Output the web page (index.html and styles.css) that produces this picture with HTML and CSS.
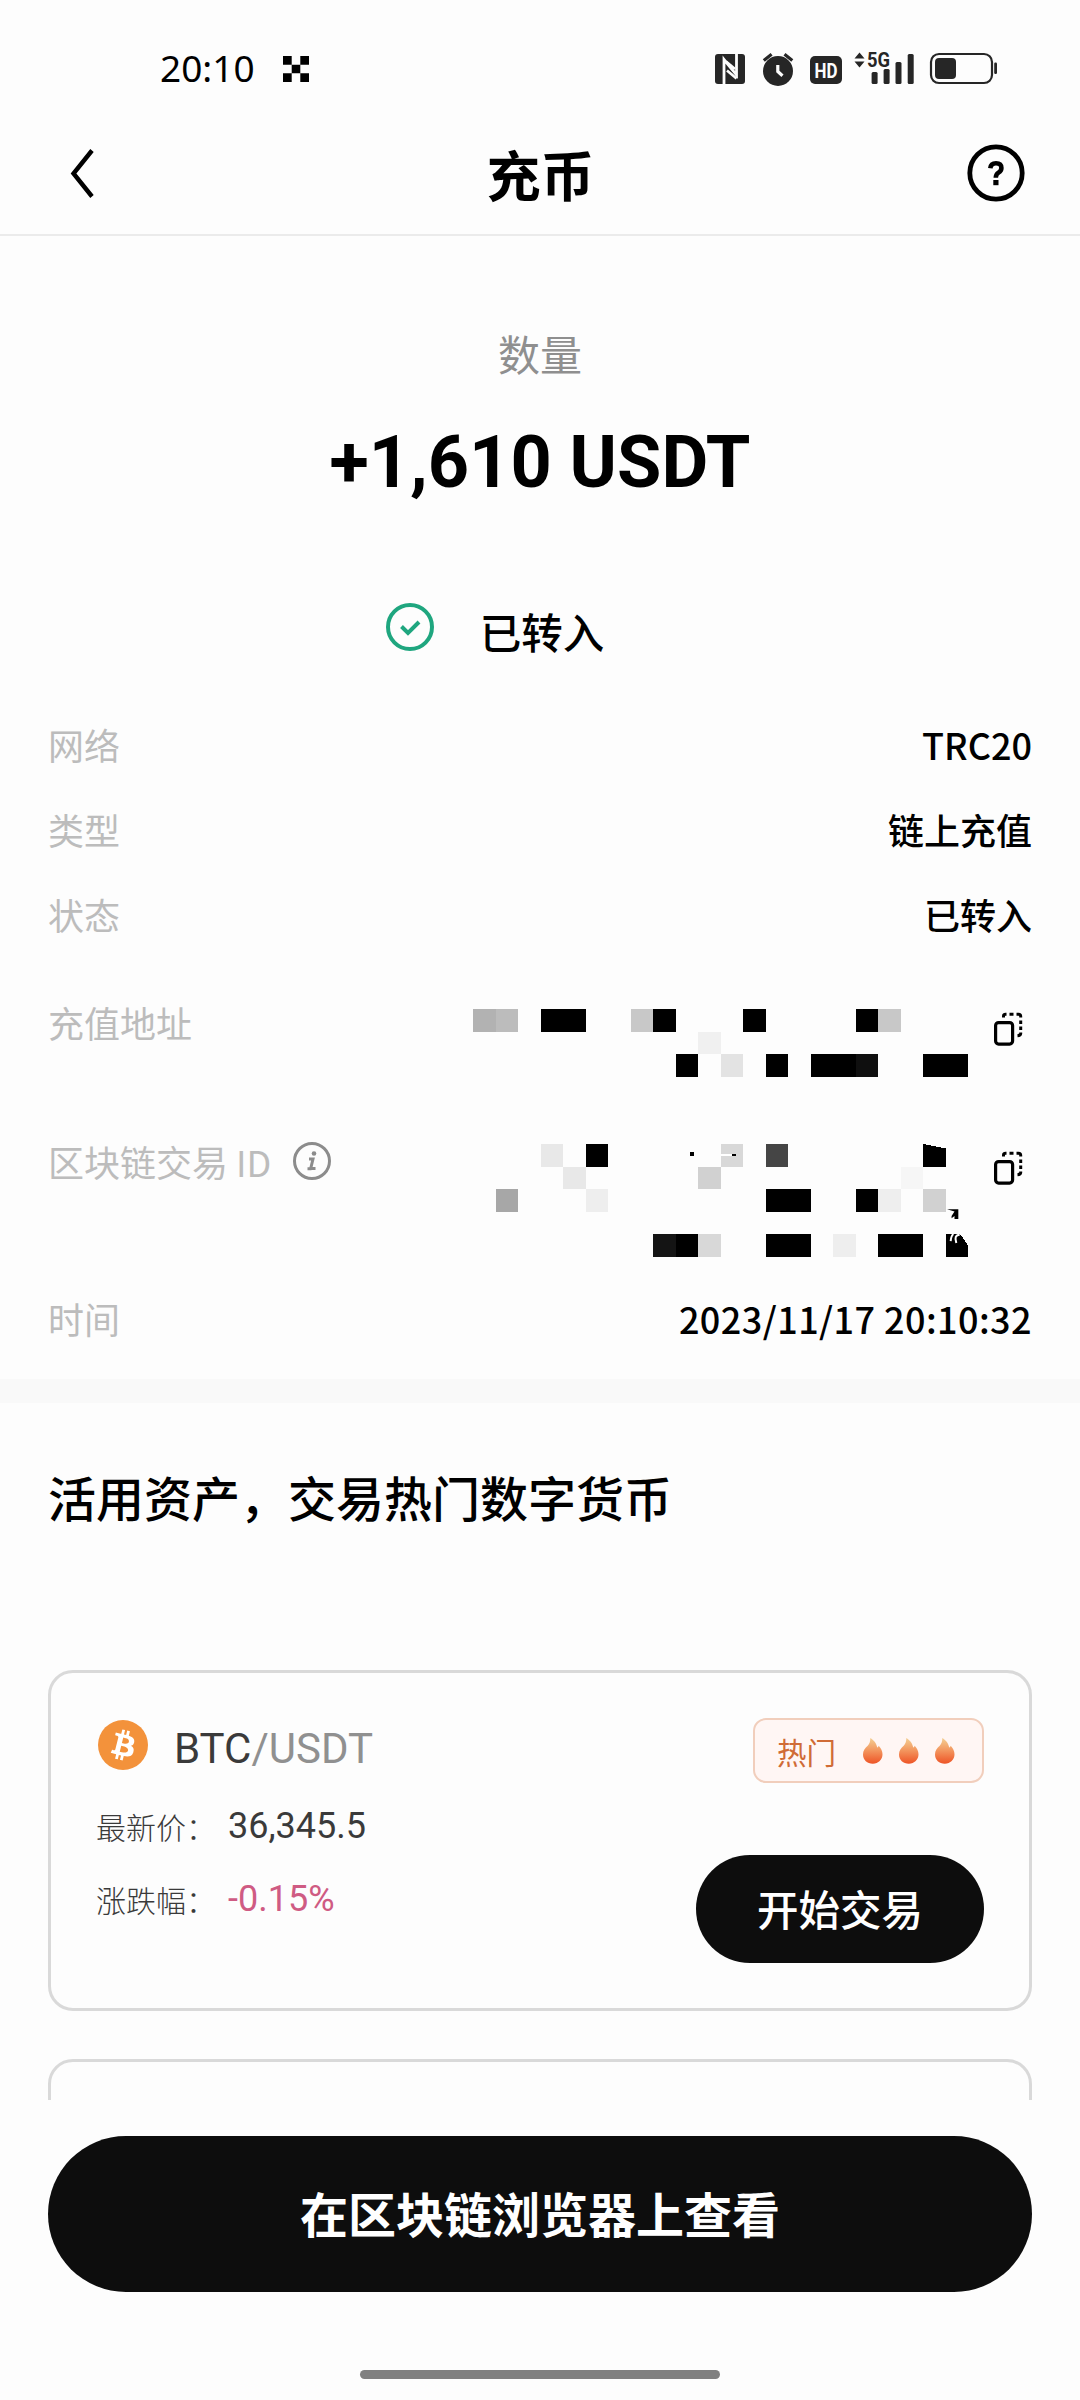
FILE: index.html
```html
<!DOCTYPE html>
<html lang="zh-CN">
<head>
<meta charset="utf-8">
<title>充币</title>
<link rel="stylesheet" href="styles.css">
</head>
<body>
<svg class="defs" width="0" height="0" aria-hidden="true">
  <defs>
    <linearGradient id="fire" x1="0" y1="0" x2="0" y2="1">
      <stop offset="0" stop-color="#f3cf93"/>
      <stop offset="0.45" stop-color="#f39a62"/>
      <stop offset="1" stop-color="#ee5426"/>
    </linearGradient>
    <symbol id="flame" viewBox="0 0 20 26">
      <path fill="url(#fire)" d="M7.300 0c3.200 2 6.200 5 6.900 9.600c.9-.5 1.300-1 1.500-1.900c2.300 2.400 3.800 5.300 3.800 8.600c0 5.400-4.100 9.400-9.700 9.400S0 21.700 0 16.400c0-4 2.100-6.200 4.700-8.700C6.800 5.600 7.300 3.400 7.300 0z"/>
    </symbol>
    <symbol id="copy" viewBox="0 0 30 34">
      <rect x="1.600" y="10.600" width="17" height="21.500" rx="3" fill="none" stroke="#000" stroke-width="3.200"/>
      <path d="M9.500 5.500V4Q9.500 2.300 11.500 2.300H12.500M15.500 2.300H19.500M22.500 2.300H24.500Q26.700 2.300 26.700 4.300V5.500M26.700 8.500V12M26.700 14.500V18M26.700 20.500V21.500Q26.500 23.500 23.500 23.700" fill="none" stroke="#000" stroke-width="3"/>
    </symbol>
  </defs>
</svg>

<div class="screen">
  <div class="status">
    <div class="status-left">
      <span class="clock">20:10</span>
      <svg width="26" height="26" viewBox="0 0 26 26"><path d="M0 0h8.700v8.700H0zM17.300 0H26v8.700h-8.700zM8.700 8.700h8.600v8.600H8.700zM0 17.300h8.700V26H0zM17.300 17.300H26V26h-8.700z"/></svg>
    </div>
    <svg class="status-icons" width="284" height="56" viewBox="714 41 284 56">
      <g fill="#262626">
        <rect x="715" y="54" width="30" height="30" rx="3"/>
        <path d="M724 84V59.500L736.500 75V54" fill="none" stroke="#fdfdfd" stroke-width="2.800"/>
        <path d="M727.500 67l7.500 8.500V84h-7.500z" fill="#262626"/>
        <path d="M726 61.500l9 7.500" fill="none" stroke="#fdfdfd" stroke-width="2.600"/>
        <path d="M727 70.500l9.500 8" fill="none" stroke="#fdfdfd" stroke-width="2.600"/>
        <circle cx="778" cy="71" r="15"/>
        <path d="M763.800 60.500l7.800-6.200M792.300 60.500l-7.800-6.200" stroke="#262626" stroke-width="3.200"/>
        <path d="M777.800 65v6.500l4.700 4.200" fill="none" stroke="#fdfdfd" stroke-width="3.200"/>
        <rect x="810" y="56" width="32" height="28" rx="5"/>
        <text class="hd" x="826" y="77.500" text-anchor="middle" textLength="23" lengthAdjust="spacingAndGlyphs">HD</text>
        <path d="M859.500 52.500l5 6h-10zM859.500 67.500l5-6h-10z"/>
        <text class="net" x="867" y="67" textLength="23" lengthAdjust="spacingAndGlyphs">5G</text>
        <rect x="871.600" y="72" width="6" height="12" rx="1.500"/>
        <rect x="883.600" y="69" width="6" height="15" rx="1.500"/>
        <rect x="895.500" y="62" width="6" height="22" rx="1.500"/>
        <rect x="907.700" y="54" width="6" height="30" rx="1.500"/>
        <rect x="931" y="54" width="61" height="29" rx="8" fill="none" stroke="#262626" stroke-width="2.200"/>
        <rect x="935" y="58" width="21" height="21" rx="4"/>
        <rect x="994.200" y="62.500" width="2.800" height="11.500" rx="1.200"/>
      </g>
    </svg>
  </div>

  <header class="nav">
    <svg width="30" height="50" viewBox="0 0 30 50"><path d="M25 2.500L6.500 25.500l18.500 23" fill="none" stroke="#000" stroke-width="4.400"/></svg>
    <h1>充币</h1>
    <svg width="58" height="58" viewBox="0 0 58 58"><circle cx="29" cy="29" r="26.200" fill="none" stroke="#000" stroke-width="4.800"/><path d="M23.300 24.300Q23.800 19.300 29 19.300Q34.400 19.300 34.400 24Q34.400 26.800 31.500 28.700Q28.800 30.500 28.800 33.800" fill="none" stroke="#000" stroke-width="4.600"/><rect x="26.300" y="36" width="5.200" height="5.200"/></svg>
  </header>

  <section class="summary">
    <div class="caption">数量</div>
    <div class="amount">+1,610 USDT</div>
    <div class="state">
      <svg width="48" height="48" viewBox="0 0 48 48" fill="none" stroke="#1fa67f" stroke-width="4"><circle cx="24" cy="24" r="22"/><path d="M15.500 23.500l6.500 6.500 11-11"/></svg>
      <span>已转入</span>
    </div>
  </section>

  <section class="details">
    <div class="row"><span class="label">网络</span><span class="value">TRC20</span></div>
    <div class="row"><span class="label">类型</span><span class="value">链上充值</span></div>
    <div class="row"><span class="label">状态</span><span class="value">已转入</span></div>
    <div class="row address">
      <span class="label">充值地址</span>
      <div class="masked">
        <svg class="mosaic" width="495" height="67.500" viewBox="0 0 22 3" shape-rendering="crispEdges">
          <path d="M3 0h2v1H3zM8 0h1v1H8zM12 0h1v1h-1zM17 0h1v1h-1zM9 2h1v1H9zM13 2h1v1h-1zM15 2h2v1h-2zM20 2h2v1h-2z"/>
          <path fill="#b2b2b2" d="M0 0h1v1H0z"/><path fill="#bcbcbc" d="M1 0h1v1H1z"/>
          <path fill="#c8c8c8" d="M7 0h1v1H7zM18 0h1v1h-1z"/>
          <path fill="#f0f0f0" d="M10 1h1v1h-1z"/><path fill="#e3e3e3" d="M11 2h1v1h-1z"/>
          <path fill="#0f0f0f" d="M17 2h1v1h-1z"/>
        </svg>
        <svg class="copy" width="30" height="34"><use href="#copy"/></svg>
      </div>
    </div>
    <div class="row txid">
      <span class="label">区块链交易 ID
        <svg width="38" height="38" viewBox="0 0 38 38"><circle cx="19" cy="19" r="17.500" fill="none" stroke="#8c8c8c" stroke-width="3"/><circle cx="21" cy="11.500" r="2.300" fill="#8c8c8c"/><path d="M16 17h4l-2.300 9.500h4.800M14.500 26.700h4" fill="none" stroke="#8c8c8c" stroke-width="3"/></svg>
      </span>
      <div class="masked">
        <svg class="mosaic" width="495" height="112.500" viewBox="0 0 22 5" shape-rendering="crispEdges">
          <path d="M5 0h1v1H5zM20 0l1 .2v.8h-1zM13 2h2v1h-2zM17 2h1v1h-1zM9 4h1v1H9zM13 4h2v1h-2zM18 4h2v1h-2zM21 4h.65L22 4.500V5h-1zM9.630 .37h.17v.16h-.17z"/>
          <path fill="#e8e8e8" d="M3 0h1v1H3zM4 1h1v1H4z"/><path fill="#eee" d="M5 2h1v1H5zM18 2h1v1h-1zM16 4h1v1h-1z"/>
          <path fill="#d8d8d8" d="M11 0h1v1h-1zM10 4h1v1h-1z"/><path fill="#454545" d="M13 0h1v1h-1z"/>
          <path fill="#fff" d="M11 .43h.5v.1H11z"/><path d="M11.500 .44h.17v.1h-.17z"/>
          <path fill="#d1d1d1" d="M10 1h1v1h-1zM20 2h1v1h-1z"/><path fill="#f6f6f6" d="M19 1h1v1h-1z"/>
          <path fill="#a7a7a7" d="M1 2h1v1H1z"/><path fill="#141414" d="M8 4h1v1H8z"/>
          <g shape-rendering="auto"><path d="M21.070 2.900h.5v.43h-.17v-.13l-.13.1v-.1l.13-.2z"/><path d="M21.230 4.320q.02-.25.12-.32M21.480 4.400q-.12-.35.150-.37" fill="none" stroke="#fff" stroke-width=".09"/></g>
        </svg>
        <svg class="copy" width="30" height="34"><use href="#copy"/></svg>
      </div>
    </div>
    <div class="row time"><span class="label">时间</span><span class="value date">2023/11/17 20:10:32</span></div>
  </section>

  <section class="market">
    <h2>活用资产，交易热门数字货币</h2>
    <article class="card">
      <div class="pair-info">
        <div class="pair">
          <svg width="50" height="50" viewBox="0 0 32 32"><circle cx="16" cy="16" r="16" fill="#f3923b"/><path fill="#fff" d="M23.189 14.020c.314-2.096-1.283-3.223-3.465-3.975l.708-2.840-1.728-.43-.69 2.765c-.454-.114-.92-.22-1.385-.326l.695-2.783L15.596 6l-.708 2.839c-.376-.086-.746-.17-1.104-.26l.002-.009-2.384-.595-.46 1.846s1.283.294 1.256.312c.7.175.826.638.805 1.006l-.806 3.235c.048.012.11.03.18.057l-.183-.045-1.130 4.532c-.086.212-.303.531-.793.41.018.025-1.256-.313-1.256-.313l-.858 1.978 2.250.561c.418.105.828.215 1.231.318l-.715 2.872 1.727.43.708-2.840c.472.127.93.245 1.378.357l-.706 2.828 1.728.43.715-2.866c2.948.558 5.164.333 6.097-2.333.752-2.146-.037-3.385-1.588-4.192 1.130-.26 1.980-1.003 2.207-2.538zm-3.950 5.538c-.533 2.147-4.148.986-5.320.695l.95-3.805c1.172.293 4.929.872 4.370 3.110zm.535-5.569c-.487 1.953-3.495.96-4.470.717l.86-3.450c.975.243 4.118.696 3.610 2.733z"/></svg>
          <span class="symbol">BTC<span class="quote">/USDT</span></span>
        </div>
        <div class="stat"><span class="stat-name">最新价：</span><span class="num">36,345.5</span></div>
        <div class="stat"><span class="stat-name">涨跌幅：</span><span class="num down">-0.15%</span></div>
      </div>
      <div class="actions">
        <div class="hot"><span>热门</span>
          <svg width="20" height="26"><use href="#flame"/></svg>
          <svg width="20" height="26"><use href="#flame"/></svg>
          <svg width="20" height="26"><use href="#flame"/></svg>
        </div>
        <button class="trade">开始交易</button>
      </div>
    </article>
    <article class="card next"></article>
  </section>

  <footer class="footer">
    <button class="explore">在区块链浏览器上查看</button>
    <div class="home-bar"></div>
  </footer>
</div>
</body>
</html>
```
FILE: styles.css
```css
* { box-sizing: border-box; }
body {
  margin: 0;
  background: #fdfdfd;
  color: #000;
  font-family: "Noto Sans CJK SC", sans-serif;
}
svg { display: block; flex: none; }
.defs { position: absolute; }
h1, h2 { margin: 0; }
button {
  border: 0;
  padding: 0;
  background: #0d0d0d;
  color: #fff;
  font-family: inherit;
}
.screen {
  width: 1080px;
  height: 2400px;
  display: flex;
  flex-direction: column;
  overflow: hidden;
  white-space: nowrap;
}

/* status bar */
.status {
  height: 138px;
  padding: 0 82px 0 160px;
  display: flex;
  justify-content: space-between;
  align-items: center;
}
.status-left { display: flex; align-items: center; gap: 27px; }
.clock { font: 37px/50px "Noto Sans", sans-serif; width: 96px; padding-bottom: 2px; }
.hd { font: bold 21px Roboto, sans-serif; fill: #fdfdfd; }
.net { font: bold 20px Roboto, sans-serif; }

/* navigation */
.nav {
  height: 98px;
  padding: 2px 55px 28px 67px;
  border-bottom: 2px solid #ebebeb;
  display: flex;
  justify-content: space-between;
  align-items: center;
}
.nav h1 { font-size: 54px; line-height: 70px; font-weight: 700; padding: 1px 0 0 17px; }

/* amount */
.summary {
  height: 465px;
  padding-top: 87px;
  display: flex;
  flex-direction: column;
  align-items: center;
}
.caption { font-size: 42px; line-height: 60px; color: #8f8f8f; }
.amount { font: bold 72px/84px Roboto, sans-serif; margin-top: 38px; }
.state { display: flex; align-items: flex-start; gap: 46px; margin: 98px 90px 0 0; }
.state span { font-size: 41.500px; line-height: 56px; font-weight: 500; }

/* detail rows */
.details { height: 678px; padding: 0 48px; }
.row {
  height: 85px;
  display: flex;
  justify-content: space-between;
  align-items: center;
  font-size: 36px;
  line-height: 52px;
}
.label { color: #bcbcbc; display: flex; align-items: center; gap: 22px; }
.value { font-weight: 500; }
.date { letter-spacing: 0.430px; }
.address, .txid, .time { align-items: flex-start; }
.address { height: 179px; padding-top: 40px; }
.txid { height: 157px; }
.time { height: 52px; }
.masked { display: flex; align-items: flex-start; gap: 26px; padding-right: 8px; }
.address .mosaic { margin-top: 13px; }
.txid .mosaic { margin-top: 9px; }
.copy { margin-top: 16px; }

/* markets */
.market {
  height: 721px;
  padding: 60px 48px 0;
  border-top: 24px solid #f9f9f9;
  display: flex;
  flex-direction: column;
  gap: 48px;
  overflow: hidden;
}
.market h2 { font-size: 48px; line-height: 66px; font-weight: 500; margin-bottom: 93px; }
.card {
  height: 341px;
  flex: none;
  padding: 45px;
  border: 3px solid #d9d9d9;
  border-radius: 25px;
  display: flex;
  justify-content: space-between;
}
.pair-info { color: #3a3a3a; padding: 2px 0 0 2px; }
.pair { height: 54px; display: flex; align-items: flex-start; gap: 26px; margin-bottom: 17px; }
.symbol { font: 42px/50px Roboto, sans-serif; padding-top: 4px; }
.quote { color: #909090; }
.stat { height: 73px; display: flex; align-items: flex-start; }
.stat-name { width: 132px; margin-left: -2px; font-size: 30px; line-height: 70px; font-weight: 300; }
.num { font: 36px/71px Roboto, sans-serif; }
.down { color: #cf5b83; }
.actions { display: flex; flex-direction: column; align-items: flex-end; gap: 72px; }
.hot {
  width: 231px;
  height: 65px;
  padding-left: 22px;
  border: 2px solid #f1cebc;
  border-radius: 13px;
  background: #fff6f4;
  color: #d06b36;
  display: flex;
  align-items: center;
  gap: 16px;
}
.hot span { font-size: 29.500px; line-height: 60px; margin-right: 11px; }
.trade { width: 288px; height: 108px; padding-bottom: 3px; border-radius: 54px; font-size: 41.500px; font-weight: 500; line-height: 104px; }

/* footer */
.footer {
  height: 300px;
  padding-top: 36px;
  display: flex;
  flex-direction: column;
  align-items: center;
  gap: 78px;
}
.explore { width: 984px; height: 156px; padding-bottom: 4px; border-radius: 78px; font-size: 48px; font-weight: 700; }
.home-bar { width: 360px; height: 9px; border-radius: 5px; background: #808080; }
```
